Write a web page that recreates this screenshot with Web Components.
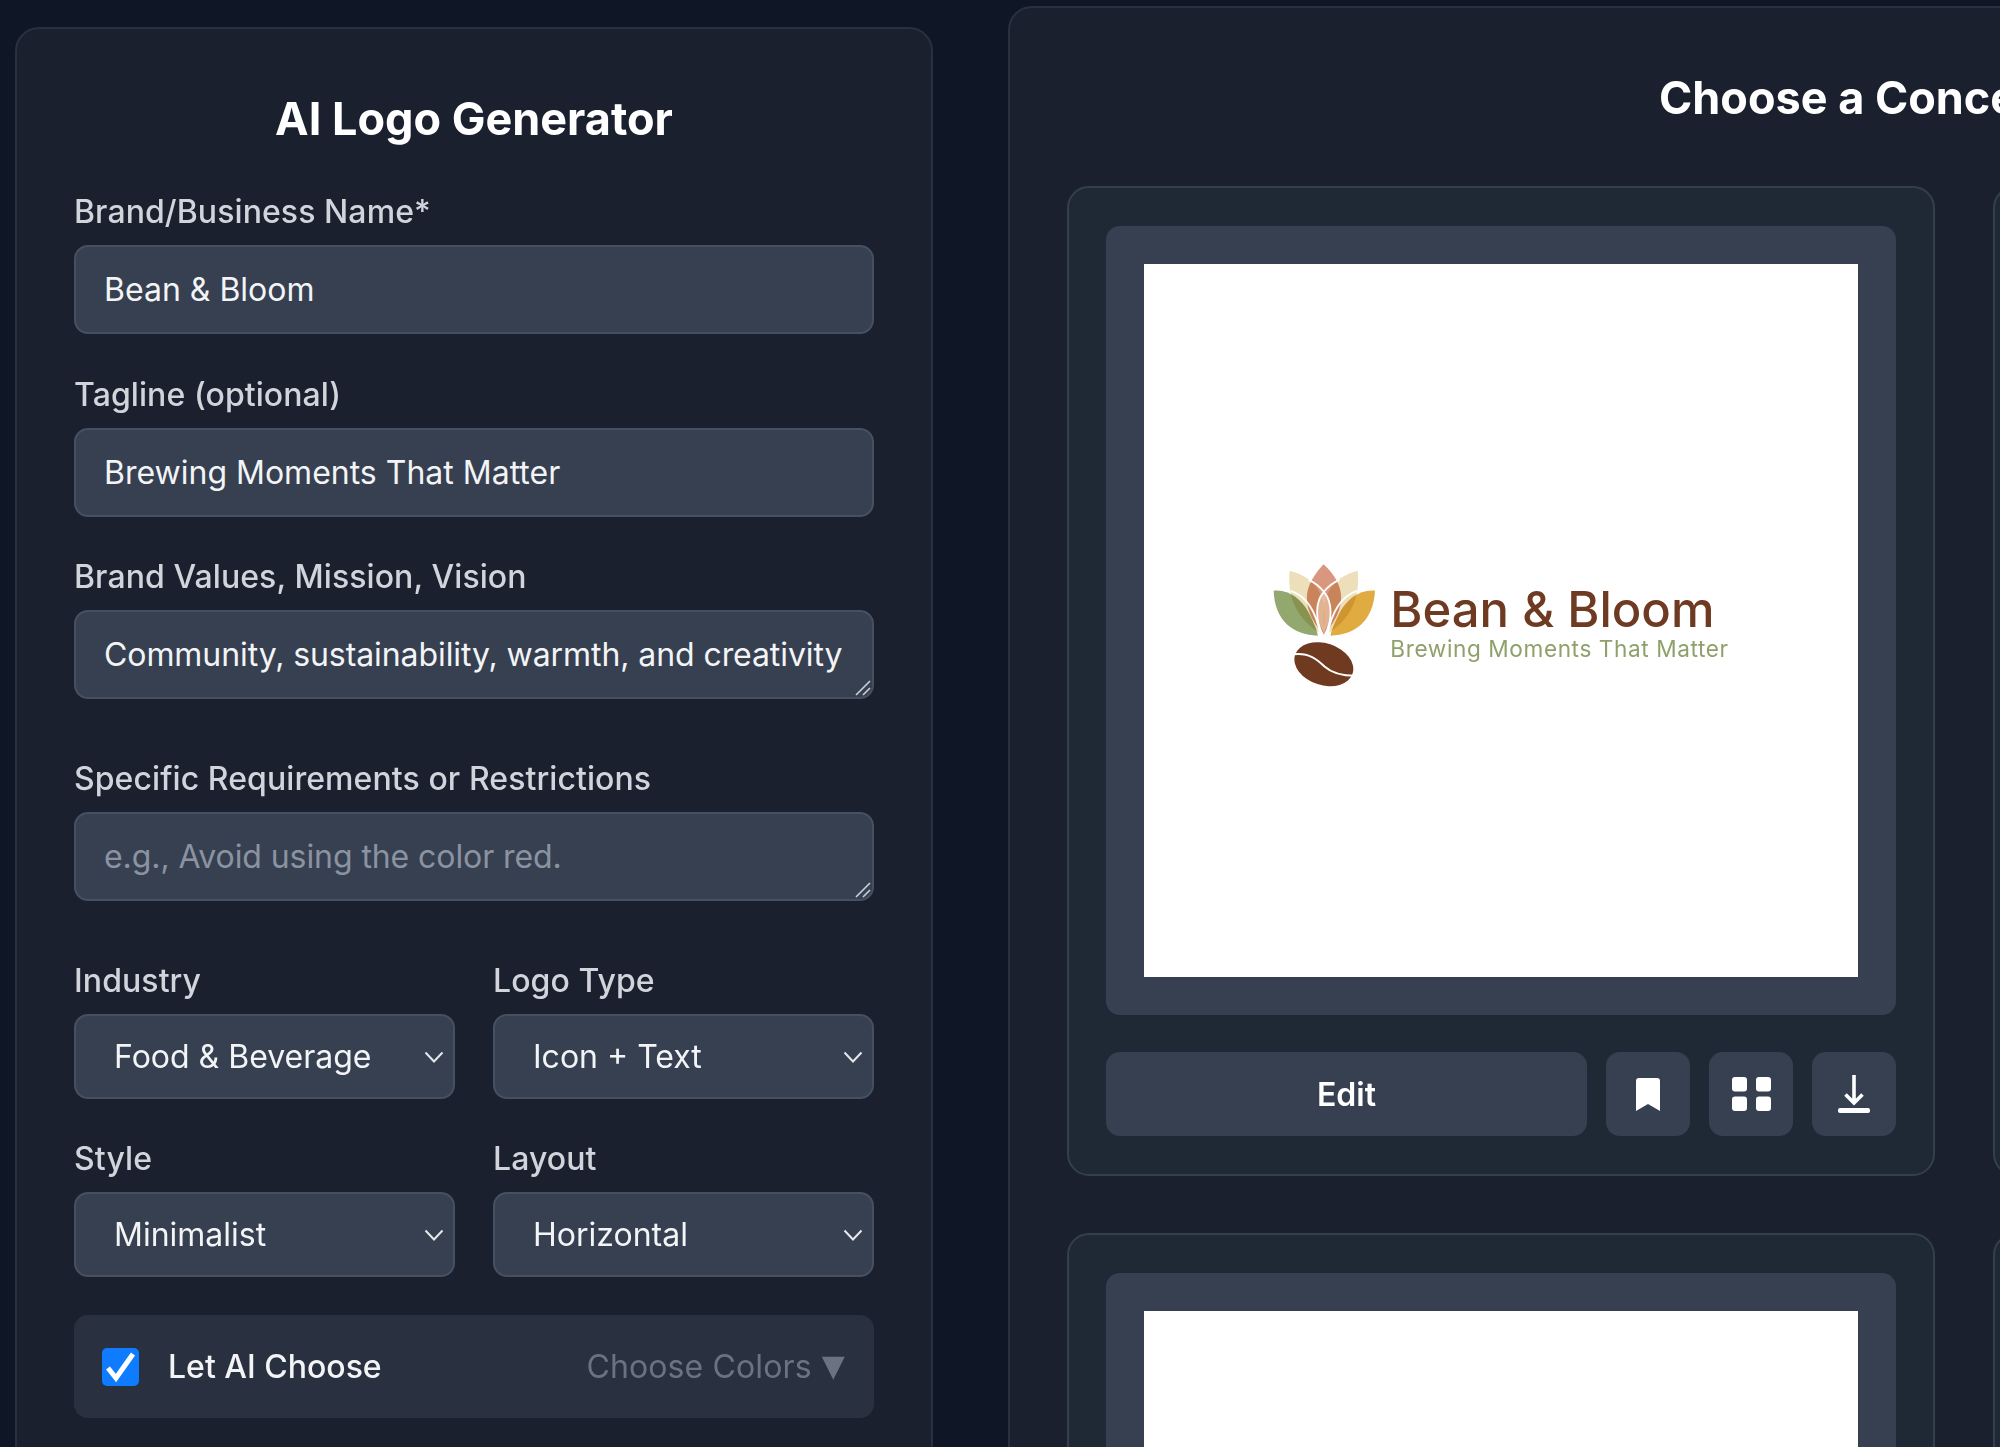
<!DOCTYPE html>
<html>
<head>
<meta charset="utf-8">
<title>AI Logo Generator</title>
<style>
  html, body { margin: 0; height: 100%; overflow: hidden; background: #0f1726; }
  body { font-family: Inter, "Liberation Sans", sans-serif; color: #fff; }
</style>
</head>
<body>
<logo-app>
  <form-panel>
    <form-field label="Brand/Business Name*"><text-box>Bean &amp; Bloom</text-box></form-field>
    <form-field label="Tagline (optional)"><text-box>Brewing Moments That Matter</text-box></form-field>
    <form-field label="Brand Values, Mission, Vision" tall><text-box area>Community, sustainability, warmth, and creativity</text-box></form-field>
    <form-field label="Specific Requirements or Restrictions" tall><text-box area placeholder>e.g., Avoid using the color red.</text-box></form-field>
    <select-grid>
      <form-field label="Industry" compact><select-box>Food &amp; Beverage</select-box></form-field>
      <form-field label="Logo Type" compact><select-box>Icon + Text</select-box></form-field>
      <form-field label="Style" compact><select-box>Minimalist</select-box></form-field>
      <form-field label="Layout" compact><select-box>Horizontal</select-box></form-field>
    </select-grid>
    <color-row></color-row>
  </form-panel>
  <concept-panel>
    <concept-card><logo-mark></logo-mark></concept-card>
    <concept-card blank></concept-card>
    <concept-card blank></concept-card>
    <concept-card blank></concept-card>
  </concept-panel>
</logo-app>

<script>
class LogoApp extends HTMLElement {
  constructor() {
    super()
    this.attachShadow({ mode: 'open' }).innerHTML = `
      <style>
        :host { display: flex; align-items: flex-start; gap: 75px; height: 1447px; padding-left: 15px; overflow: hidden; }
      </style>
      <slot></slot>
    `
  }
}

class FormPanel extends HTMLElement {
  constructor() {
    super()
    this.attachShadow({ mode: 'open' }).innerHTML = `
      <style>
        :host {
          display: block; flex: none; box-sizing: border-box; width: 918px; height: 1500px;
          margin-top: 27px; padding: 61px 57px 0;
          background: #1a202e; border: 2px solid #283142; border-radius: 24px;
        }
        h1 { margin: 0 0 45px; font-size: 45px; line-height: 58px; font-weight: 700; text-align: center; color: #fff; }
      </style>
      <h1>AI Logo Generator</h1>
      <slot></slot>
    `
  }
}

class FormField extends HTMLElement {
  constructor() {
    super()
    this.attachShadow({ mode: 'open' }).innerHTML = `
      <style>
        :host { display: block; margin-bottom: 41.5px; }
        :host([tall]) { margin-bottom: 61px; }
        :host([compact]) { margin-bottom: 0; }
        label { display: block; margin-bottom: 14px; font-size: 32px; line-height: 38px; font-weight: 500; letter-spacing: .08px; color: #d1d5db; }
      </style>
      <label></label>
      <slot></slot>
    `
    this.shadowRoot.querySelector('label').textContent = this.getAttribute('label')
  }
}

class TextBox extends HTMLElement {
  constructor() {
    super()
    this.attachShadow({ mode: 'open' }).innerHTML = `
      <style>
        :host {
          display: flex; align-items: center; position: relative; box-sizing: border-box; height: 89px;
          padding: 0 28px; background: #364051; border: 2px solid #465061; border-radius: 14px;
          font-size: 32px; color: #f3f4f6; white-space: nowrap;
        }
        :host([area]) { letter-spacing: -.08px; }
        :host([placeholder]) { color: #8b93a1; }
        svg { display: none; position: absolute; right: 1px; bottom: 1px; }
        :host([area]) svg { display: block; }
      </style>
      <slot></slot>
      <svg width="16" height="16" viewBox="0 0 16 16" fill="none" stroke="#cbd0d8" stroke-width="1.6">
        <path d="M1 15 15 1M8 15 15 8"/>
      </svg>
    `
  }
}

class SelectGrid extends HTMLElement {
  constructor() {
    super()
    this.attachShadow({ mode: 'open' }).innerHTML = `
      <style>
        :host { display: grid; grid-template-columns: 381px 381px; column-gap: 38px; row-gap: 41px; }
      </style>
      <slot></slot>
    `
  }
}

class SelectBox extends HTMLElement {
  constructor() {
    super()
    this.attachShadow({ mode: 'open' }).innerHTML = `
      <style>
        :host {
          display: flex; align-items: center; justify-content: space-between; box-sizing: border-box; height: 85px;
          padding: 0 9px 0 38px; background: #364051; border: 2px solid #465061; border-radius: 14px;
          font-size: 32px; color: #f3f4f6;
        }
      </style>
      <slot></slot>
      <svg width="20" height="12" viewBox="0 0 20 12" fill="none" stroke="#e5e7eb" stroke-width="2">
        <path d="M1.5 1.5 10 10.5 18.5 1.5"/>
      </svg>
    `
  }
}

class ColorRow extends HTMLElement {
  constructor() {
    super()
    this.attachShadow({ mode: 'open' }).innerHTML = `
      <style>
        :host {
          display: flex; align-items: center; box-sizing: border-box; height: 103px; margin-top: 38px;
          padding: 0 29px 0 28px; background: #293140; border-radius: 14px; font-size: 32px;
        }
        .box {
          display: flex; align-items: center; justify-content: center; flex: none;
          width: 37px; height: 38px; margin-right: 29px; background: #0f7bff; border-radius: 5px;
        }
        .name { flex: 1; color: #f3f4f6; font-weight: 500; }
        .pick { letter-spacing: .12px; color: #6b7280; }
        .pick span { position: relative; top: -2px; margin-left: 1px; font-family: "DejaVu Sans", sans-serif; font-size: 30px; line-height: 1; }
      </style>
      <div class="box">
        <svg width="37" height="38" viewBox="0 0 37 38" fill="none" stroke="#fff" stroke-width="5">
          <path d="M6 20 14 30 31 6"/>
        </svg>
      </div>
      <div class="name">Let AI Choose</div>
      <div class="pick">Choose Colors <span>▼</span></div>
    `
  }
}

class ConceptPanel extends HTMLElement {
  constructor() {
    super()
    this.attachShadow({ mode: 'open' }).innerHTML = `
      <style>
        :host {
          display: block; flex: none; box-sizing: border-box; width: 1912px; height: 1500px;
          margin-top: 6px; padding: 61px 56px 0 57px;
          background: #1a202e; border: 2px solid #283142; border-radius: 24px;
        }
        h2 { margin: 0 0 59px; padding-left: 592px; font-size: 45px; line-height: 58px; font-weight: 700; color: #fff; white-space: nowrap; }
        .grid { display: grid; grid-template-columns: 868px 868px; column-gap: 58px; row-gap: 57px; }
      </style>
      <h2>Choose a Concept</h2>
      <div class="grid"><slot></slot></div>
    `
  }
}

class ConceptCard extends HTMLElement {
  constructor() {
    super()
    const blank = this.hasAttribute('blank')
    this.attachShadow({ mode: 'open' }).innerHTML = `
      <style>
        :host {
          display: block; box-sizing: border-box; width: 868px; height: 990px; padding: 38px 37px;
          background: #1f2936; border: 2px solid #343e4e; border-radius: 22px;
        }
        .preview { box-sizing: border-box; height: 789px; padding: 38px; background: #364051; border-radius: 14px; }
        .canvas {
          display: flex; align-items: center; justify-content: center; box-sizing: border-box;
          height: 713px; padding-top: 10px; background: #fff;
        }
        .actions { display: flex; gap: 19px; height: 84px; margin-top: 37px; }
        button {
          display: flex; align-items: center; justify-content: center; flex: none; width: 84px; height: 84px;
          padding: 0; background: #364051; border: 0; border-radius: 14px; color: #fff;
          font: 600 32px Inter, "Liberation Sans", sans-serif;
        }
        button.edit { flex: 1; }
      </style>
      <div class="preview"><div class="canvas"><slot></slot></div></div>
      ${blank ? '' : `<div class="actions">
        <button class="edit">Edit</button>
        <button>
          <svg width="24" height="33" viewBox="0 0 24 33" fill="#fff"><path d="M3 0H21A3 3 0 0 1 24 3V33L12 26 0 33V3A3 3 0 0 1 3 0Z"/></svg>
        </button>
        <button>
          <svg width="39" height="34" viewBox="0 0 39 34" fill="#fff">
            <rect width="15" height="14.5" rx="3"/><rect x="24" width="15" height="14.5" rx="3"/>
            <rect y="19.5" width="15" height="14.5" rx="3"/><rect x="24" y="19.5" width="15" height="14.5" rx="3"/>
          </svg>
        </button>
        <button>
          <svg width="32" height="38" viewBox="0 0 32 38" fill="none" stroke="#fff">
            <path d="M16 0V27M7.500 19.500 16 28 24.500 19.500" stroke-width="3.600"/>
            <rect x="0" y="33" width="32" height="5" rx="2" fill="#fff" stroke="none"/>
          </svg>
        </button>
      </div>`}
    `
  }
}

class LogoMark extends HTMLElement {
  constructor() {
    super()
    this.attachShadow({ mode: 'open' }).innerHTML = `
      <style>
        :host { display: flex; align-items: center; gap: 14px; }
        svg { display: block; flex: none; }
        .text { margin-bottom: 3px; }
        .name { font-size: 49px; line-height: 50px; font-weight: 450; color: #6f3a22; white-space: nowrap; }
        .tag { font-size: 22.6px; line-height: 28px; letter-spacing: .6px; color: #8fa06a; white-space: nowrap; }
        .petals path { mix-blend-mode: multiply; }
      </style>
      <svg width="103" height="125" viewBox="65 42 310 375" fill="none">
        <g class="petals" style="isolation:isolate">
          <path fill="#93a86e" d="M67 125C112 120 150 150 172 190 188 220 198 245 200 260 125 258 70 215 67 125Z"/>
          <path fill="#e0ab41" d="M372 125C327 120 288 150 266 190 250 220 240 245 238 260 313 258 367 215 372 125Z"/>
          <path fill="#eddfb9" d="M115 65C168 78 208 110 217 165 224 205 220 235 214 257 160 225 105 170 115 65Z"/>
          <path fill="#eddfb9" d="M320 65C268 78 230 110 220 165 213 205 217 235 223 257 277 225 330 170 320 65Z"/>
          <path fill="#d9977f" d="M217 45C250 75 272 110 270 150 268 195 240 232 218 258 195 232 168 195 167 150 165 110 190 75 217 45Z"/>
        </g>
        <path d="M218 128C192 160 195 215 218 250 241 215 244 160 218 128Z" fill="#f3d2b6" fill-opacity=".6"/>
        <g stroke="#fff" stroke-width="5.500">
          <path d="M118 125C165 140 195 185 208 260"/>
          <path d="M318 125C272 140 242 185 228 260"/>
          <path d="M218 128C190 160 193 215 215 258M218 128C246 160 243 215 221 258"/>
          <path d="M172 92C195 102 208 115 218 128 228 115 242 102 265 92"/>
        </g>
        <ellipse cx="218" cy="346" rx="91" ry="63" transform="rotate(18 218 346)" fill="#6f3a20"/>
        <path d="M128 316C175 311 200 333 220 353 240 371 270 381 312 381" stroke="#fff" stroke-width="6"/>
      </svg>
      <div class="text">
        <div class="name">Bean &amp; Bloom</div>
        <div class="tag">Brewing Moments That Matter</div>
      </div>
    `
  }
}

customElements.define('logo-app', LogoApp)
customElements.define('form-panel', FormPanel)
customElements.define('form-field', FormField)
customElements.define('text-box', TextBox)
customElements.define('select-grid', SelectGrid)
customElements.define('select-box', SelectBox)
customElements.define('color-row', ColorRow)
customElements.define('concept-panel', ConceptPanel)
customElements.define('concept-card', ConceptCard)
customElements.define('logo-mark', LogoMark)
</script>
</body>
</html>
